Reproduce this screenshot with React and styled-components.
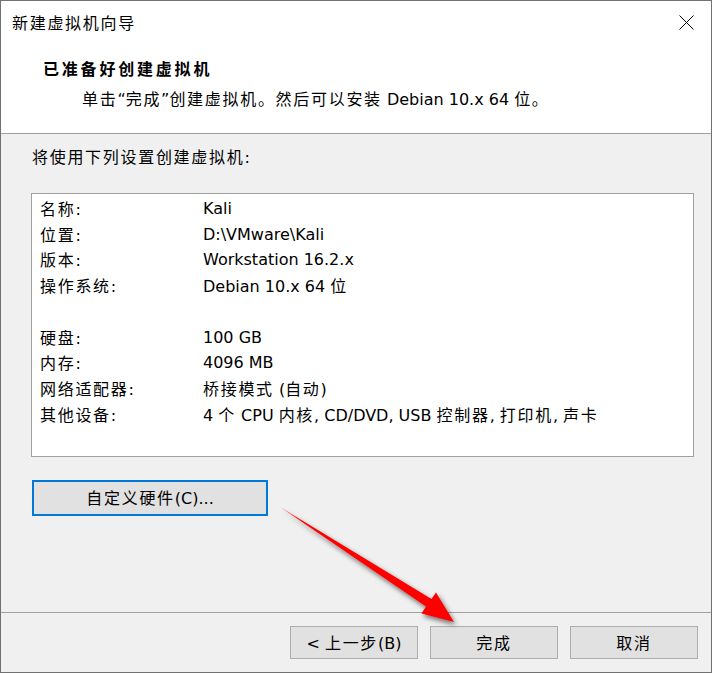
import React from "react";
import styled, { createGlobalStyle } from "styled-components";

const Global = createGlobalStyle`
  html, body { margin: 0; padding: 0; background: #ffffff; }
  body {
    font-family: "DejaVu Sans", "Noto Sans CJK SC", sans-serif;
    font-size: 16px;
    color: #000;
  }
`;

const Zh = styled.span`
  font-family: "Noto Sans CJK SC", sans-serif;
  letter-spacing: ${(p) => p.$sp ?? 1.7}px;
`;

const CJK = /([\u3000-\u303f\u4e00-\u9fff\uff00-\uffef]+)/;

function T({ children, sp }) {
  const parts = String(children).split(CJK);
  return parts.map((part, i) =>
    CJK.test(part) ? (
      <Zh key={i} $sp={sp}>
        {part}
      </Zh>
    ) : (
      <React.Fragment key={i}>{part}</React.Fragment>
    )
  );
}

const Window = styled.div`
  position: relative;
  width: 712px;
  height: 673px;
  box-sizing: border-box;
  border: 1px solid #717171;
  display: flex;
  flex-direction: column;
  background: #f0f0f0;
  overflow: hidden;
`;

const TitleBar = styled.div`
  height: 43px;
  flex: none;
  display: flex;
  align-items: center;
  padding: 0 17px 0 11px;
  background: #fff;
  font-size: 16px;
`;

const TitleText = styled.div`
  line-height: 24px;
`;

const CloseIcon = styled.svg`
  margin-left: auto;
  width: 15px;
  height: 15px;
  display: block;
`;

const Header = styled.div`
  height: 90px;
  flex: none;
  box-sizing: border-box;
  background: #fff;
  border-bottom: 1px solid #a0a0a0;
  padding: 11px 0 0 42px;
  display: flex;
  flex-direction: column;
  gap: 2px;
`;

const HeadTitle = styled.div`
  font-weight: bold;
  font-size: 16px;
  line-height: 26px;
`;

const HeadSub = styled.div`
  line-height: 26px;
  padding-left: 39px;
`;

const Body = styled.div`
  flex: 1;
  padding: 10px 17px 0 30px;
  display: flex;
  flex-direction: column;
  align-items: flex-start;
`;

const Intro = styled.div`
  line-height: 24px;
  padding-left: 1px;
`;

const ListBox = styled.div`
  margin-top: 23px;
  align-self: stretch;
  height: 264px;
  box-sizing: border-box;
  border: 1px solid #a0a0a0;
  background: #fff;
  padding: 2px 0 0 8px;
  display: grid;
  grid-template-columns: 163px 1fr;
  grid-auto-rows: 25.75px;
  align-content: start;
  align-items: center;
`;

const Cell = styled.div`
  white-space: nowrap;
  line-height: 24px;
`;

const Spacer = styled.div`
  grid-column: 1 / -1;
`;

const CustomButton = styled.button`
  margin: 23px 0 0 1px;
  width: 236px;
  height: 36px;
  box-sizing: border-box;
  border: 2px solid #0078d7;
  background: #e1e1e1;
  font: inherit;
  color: #000;
  padding: 0;
  display: block;
  text-align: center;
  line-height: 30px;
  white-space: pre;
`;

const Footer = styled.div`
  flex: none;
  height: 46px;
  border-top: 1px solid #a0a0a0;
  padding: 13px 13px 0 0;
  display: flex;
  justify-content: flex-end;
  align-items: flex-start;
  gap: 12px;
`;

const DialogButton = styled.button`
  width: 128px;
  height: 33px;
  box-sizing: border-box;
  border: 1px solid #adadad;
  background: #e1e1e1;
  font: inherit;
  color: #000;
  padding: 0;
  display: block;
  text-align: center;
  line-height: 30px;
  white-space: pre;
`;

const ArrowLayer = styled.svg`
  position: absolute;
  left: -1px;
  top: -1px;
  width: 712px;
  height: 673px;
  pointer-events: none;
`;

const rows = [
  ["名称:", "Kali"],
  ["位置:", "D:\\VMware\\Kali"],
  ["版本:", "Workstation 16.2.x"],
  ["操作系统:", "Debian 10.x 64 位"],
  null,
  ["硬盘:", "100 GB"],
  ["内存:", "4096 MB"],
  ["网络适配器:", "桥接模式 (自动)"],
  ["其他设备:", "4 个 CPU 内核, CD/DVD, USB 控制器, 打印机, 声卡"],
];

export default function App() {
  return (
    <>
      <Global />
      <Window>
        <TitleBar>
          <TitleText>
            <T>新建虚拟机向导</T>
          </TitleText>
          <CloseIcon viewBox="0 0 15 15">
            <path d="M0.5 0.5 L14.5 14.5 M14.5 0.5 L0.5 14.5" stroke="#000" strokeWidth="1" fill="none" />
          </CloseIcon>
        </TitleBar>
        <Header>
          <HeadTitle>
            <T sp={2.8}>已准备好创建虚拟机</T>
          </HeadTitle>
          <HeadSub>
            <T>{"单击“完成”创建虚拟机。然后可以安装 Debian 10.x 64 位。"}</T>
          </HeadSub>
        </Header>
        <Body>
          <Intro>
            <T>将使用下列设置创建虚拟机:</T>
          </Intro>
          <ListBox>
            {rows.map((r, i) =>
              r ? (
                <React.Fragment key={i}>
                  <Cell>
                    <T>{r[0]}</T>
                  </Cell>
                  <Cell>
                    <T>{r[1]}</T>
                  </Cell>
                </React.Fragment>
              ) : (
                <Spacer key={i} />
              )
            )}
          </ListBox>
          <CustomButton>
            <T>自定义硬件(C)...</T>
          </CustomButton>
        </Body>
        <Footer>
          <DialogButton>
            <T>{"< 上一步(B)"}</T>
          </DialogButton>
          <DialogButton>
            <T>完成</T>
          </DialogButton>
          <DialogButton>
            <T>取消</T>
          </DialogButton>
        </Footer>
        <ArrowLayer viewBox="0 0 712 673">
          <defs>
            <filter id="arrowShadow" x="-20%" y="-20%" width="140%" height="140%">
              <feDropShadow dx="2" dy="3" stdDeviation="2.5" floodColor="#000" floodOpacity="0.55" />
            </filter>
            <linearGradient id="arrowFill" x1="280" y1="507" x2="453" y2="621" gradientUnits="userSpaceOnUse">
              <stop offset="0" stopColor="#ff6a6a" />
              <stop offset="0.12" stopColor="#ff0000" />
              <stop offset="1" stopColor="#ff0000" />
            </linearGradient>
          </defs>
          <polygon
            points="280,507 431.5,599 436,592.5 454,622 421.5,613.5 426,606.5"
            fill="url(#arrowFill)"
            filter="url(#arrowShadow)"
          />
        </ArrowLayer>
      </Window>
    </>
  );
}
